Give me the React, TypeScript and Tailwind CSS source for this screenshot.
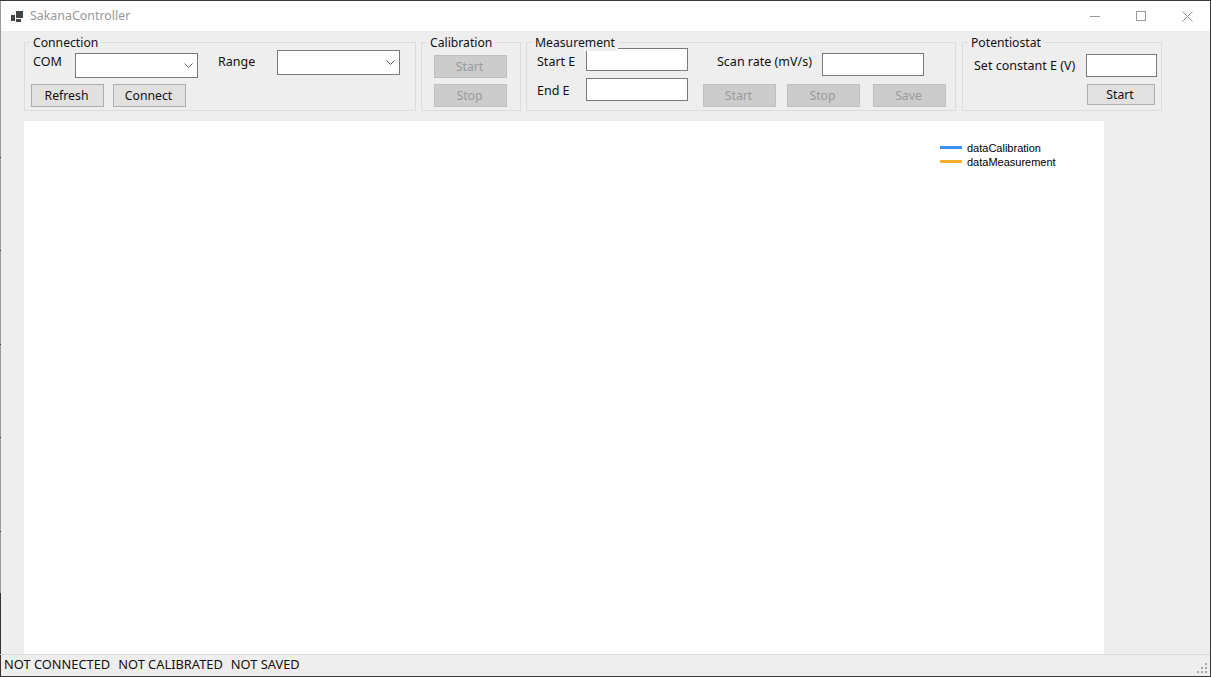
import React from 'react';

const uiFont = "font-['Noto_Sans','Open_Sans',sans-serif]";

const ticks = [157, 250, 344, 437, 531];

const GroupBox = ({ title, className, children }: { title: string; className: string; children: React.ReactNode }) => (
  <div className={`relative h-[69px] shrink-0 border border-[#dcdcdc] ${className}`}>
    <span className="absolute left-[5px] top-[-8px] bg-[#eeeeee] px-[3px] text-[12.2px] leading-[16px] text-[#111]">{title}</span>
    {children}
  </div>
);

const Btn = ({ label, disabled, className = 'w-[73px] h-[23px]' }: { label: string; disabled?: boolean; className?: string }) => (
  <button
    className={`shrink-0 border pt-[2px] pr-[2px] text-[12.25px] leading-none ${className} ${
      disabled ? 'border-[#bfbfbf] bg-[#cccccc] text-[#9a9a9a]' : 'border-[#adadad] bg-[#e1e1e1] text-[#111]'
    }`}
  >
    {label}
  </button>
);

const Combo = ({ className }: { className: string }) => (
  <div className={`flex h-[25px] w-[123px] shrink-0 items-center justify-end border border-[#7a7a7a] bg-white pr-[4px] ${className}`}>
    <svg width="9" height="5" viewBox="0 0 9 5" fill="none" stroke="#606060">
      <path d="M0.5 0.5 L4.5 4.5 L8.5 0.5" />
    </svg>
  </div>
);

const Field = ({ className }: { className: string }) => (
  <div className={`h-[23px] shrink-0 border border-[#7a7a7a] bg-white ${className}`} />
);

const Label = ({ text, className }: { text: string; className: string }) => (
  <span className={`shrink-0 whitespace-nowrap text-[12.5px] leading-[16px] text-[#111] ${className}`}>{text}</span>
);

export default function App() {
  return (
    <div className={`relative flex h-[677px] w-[1211px] flex-col overflow-hidden border-t border-r border-b border-[#3a3a3a] bg-[#eeeeee] ${uiFont}`}>
      {/* left window edge, page behind shows through */}
      <div className="absolute left-0 top-0 flex h-full w-px flex-col bg-[#9a9a9a]">
        <div className="flex-1" />
        <div className="h-[83px] bg-[#333333]" />
      </div>
      {ticks.map((y) => (
        <div key={y} className="absolute left-0 h-px w-px bg-[#333333]" style={{ top: y - 1 }} />
      ))}

      {/* title bar */}
      <div className="flex h-[30px] shrink-0 items-center bg-white pl-[11px]">
        <svg width="12" height="11" viewBox="0 0 12 11" className="mr-[7px]" fill="#444444">
          <rect x="5" y="0" width="7" height="7" />
          <rect x="0" y="4" width="4" height="6" />
          <rect x="5" y="8" width="5" height="3" />
        </svg>
        <span className="text-[12.4px] text-[#999999]">SakanaController</span>
        <div className="ml-auto flex items-center">
          <div className="flex h-[30px] w-[46px] items-center justify-center">
            <div className="h-px w-[10px] bg-[#999999]" />
          </div>
          <div className="flex h-[30px] w-[46px] items-center justify-center">
            <div className="h-[10px] w-[10px] border border-[#999999]" />
          </div>
          <div className="flex h-[30px] w-[46px] items-center justify-center">
            <svg width="11" height="11" viewBox="0 0 11 11" stroke="#999999" fill="none">
              <path d="M0.5 0.5 L10.5 10.5 M10.5 0.5 L0.5 10.5" />
            </svg>
          </div>
        </div>
      </div>

      {/* toolbar */}
      <div className="flex shrink-0 gap-[5px] pl-[24px] pt-[11px]">
        <GroupBox title="Connection" className="w-[392px]">
          <div className="flex items-start pl-[8px]">
            <Label text="COM" className="mt-[11px] w-[42px]" />
            <Combo className="mt-[10px]" />
            <Label text="Range" className="ml-[20px] mt-[11px] w-[59px]" />
            <Combo className="mt-[7px]" />
          </div>
          <div className="mt-[6px] flex gap-[9px] pl-[6px]">
            <Btn label="Refresh" />
            <Btn label="Connect" />
          </div>
        </GroupBox>

        <GroupBox title="Calibration" className="w-[100px]">
          <div className="flex flex-col gap-[6px] pl-[12px] pt-[12px]">
            <Btn label="Start" disabled />
            <Btn label="Stop" disabled />
          </div>
        </GroupBox>

        <GroupBox title="Measurement" className="w-[430px]">
          <div className="flex items-start">
            <div className="flex w-[176px] flex-col gap-[7px] pl-[10px] pt-[5px]">
              <div className="flex items-center">
                <Label text="Start E" className="mt-[4px] w-[49px]" />
                <Field className="w-[102px]" />
              </div>
              <div className="flex items-center">
                <Label text="End E" className="mt-[2px] w-[49px]" />
                <Field className="w-[102px]" />
              </div>
            </div>
            <div className="flex flex-col pt-[10px]">
              <div className="flex items-center">
                <Label text="Scan rate (mV/s)" className="mb-[6px] ml-[14px] w-[105px]" />
                <Field className="w-[102px]" />
              </div>
              <div className="mt-[8px] flex">
                <Btn label="Start" disabled />
                <Btn label="Stop" disabled className="ml-[11px] h-[23px] w-[73px]" />
                <Btn label="Save" disabled className="ml-[13px] h-[23px] w-[73px]" />
              </div>
            </div>
          </div>
        </GroupBox>

        <GroupBox title="Potentiostat" className="ml-px w-[200px]">
          <div className="flex items-center pl-[11px] pt-[11px]">
            <Label text="Set constant E (V)" className="w-[112px]" />
            <Field className="w-[71px]" />
          </div>
          <div className="mt-[7px] flex pl-[124px]">
            <Btn label="Start" className="h-[21px] w-[68px]" />
          </div>
        </GroupBox>
      </div>

      {/* chart */}
      <div className="ml-[24px] mt-[10px] flex w-[1080px] flex-1 justify-end bg-white pr-[49px] pt-[20px]">
        <div className="flex flex-col font-['Liberation_Sans',sans-serif] text-[11px] leading-[14px] text-black">
          <div className="flex items-start gap-[5px]">
            <div className="mt-[5px] h-[3px] w-[22px] bg-[#3b8ff5]" />
            <span className="w-[88px]">dataCalibration</span>
          </div>
          <div className="flex items-start gap-[5px]">
            <div className="mt-[5px] h-[3px] w-[22px] bg-[#ffae2e]" />
            <span className="w-[88px]">dataMeasurement</span>
          </div>
        </div>
      </div>

      {/* status bar */}
      <div className="relative flex h-[22px] shrink-0 items-center gap-[8px] border-t border-[#d9d9d9] pb-[2px] pl-[4px] text-[12.85px] text-[#111]">
        <span>NOT CONNECTED</span>
        <span>NOT CALIBRATED</span>
        <span>NOT SAVED</span>
        <svg width="11" height="11" viewBox="0 0 11 11" fill="#a8a8a8" className="absolute bottom-[2px] right-[2px]">
          <rect x="8" y="0" width="2" height="2" />
          <rect x="4" y="4" width="2" height="2" />
          <rect x="8" y="4" width="2" height="2" />
          <rect x="0" y="8" width="2" height="2" />
          <rect x="4" y="8" width="2" height="2" />
          <rect x="8" y="8" width="2" height="2" />
        </svg>
      </div>
    </div>
  );
}
